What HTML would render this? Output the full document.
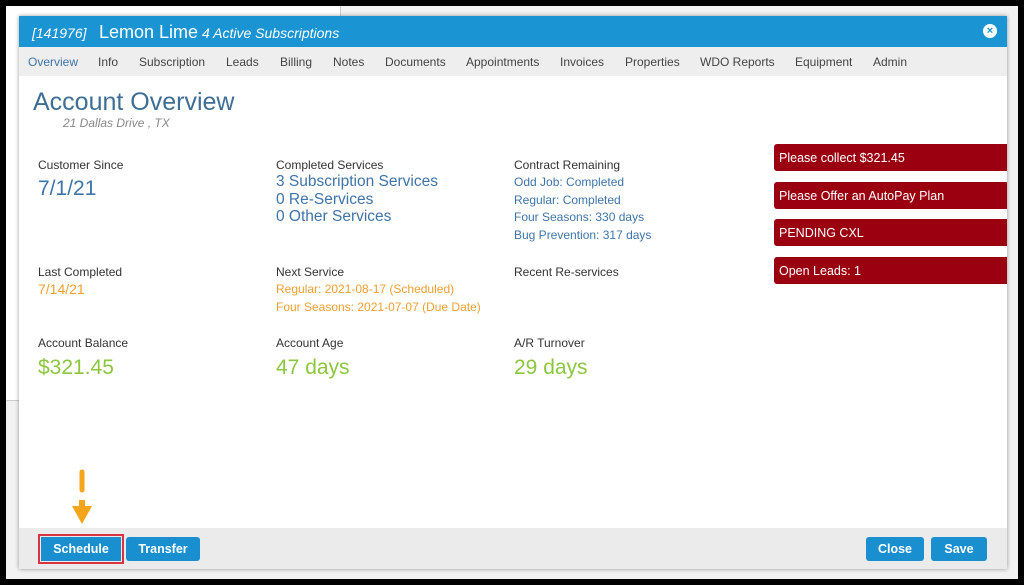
<!DOCTYPE html>
<html><head><meta charset="utf-8"><style>
*{margin:0;padding:0;box-sizing:border-box}
body{width:1024px;height:585px;background:#000;position:relative;overflow:hidden;font-family:"Liberation Sans",Arial,sans-serif}
.bg{position:absolute;left:6px;top:6px;width:1012px;height:573px;background:#f2f2f2}
.bg2{position:absolute;left:6px;top:6px;width:335px;height:395px;background:#fff;border-right:1px solid #ccc;border-bottom:1px solid #ccc}
.modal{position:absolute;left:19px;top:16px;width:988px;height:553px;background:#fff;box-shadow:0 0 4px rgba(0,0,0,.4)}
.hdr{height:31px;background:#1a94d2;color:#fff;position:relative}
.hdr .id{position:absolute;left:13px;top:9px;font-size:14px;font-style:italic}
.hdr .nm{position:absolute;left:80px;top:6px;font-size:18px}
.hdr .sub{position:absolute;left:183px;top:9px;font-size:14px;font-style:italic}
.x{position:absolute;right:10px;top:8px;width:14px;height:14px;border-radius:50%;background:#fff;color:#1a94d2;font-size:11px;font-weight:bold;text-align:center;line-height:14px}
.tabs{height:29px;background:#eee;position:relative;font-size:12px;color:#444}
.tabs span{position:absolute;top:8px}
h1{position:absolute;left:14px;top:72px;font-size:25px;font-weight:normal;color:#3f6e94}
.addr{position:absolute;left:44px;top:100px;font-size:12px;font-style:italic;color:#888}
.l{position:absolute;font-size:12px;color:#333}
.big{position:absolute;font-size:21px}
.bl{color:#3f74a8}.sm{position:absolute;font-size:12px;line-height:17.7px}
.or{color:#f0a030}.gr{color:#8cc63f}
.mid{position:absolute;font-size:15.5px;line-height:17.5px;color:#3f74a8}
.al{position:absolute;left:755px;width:233px;height:27px;background:#9b0010;color:#fff;font-size:12.5px;padding:7px 0 0 5px;border-radius:3px 0 0 3px}
.ftr{position:absolute;left:0;bottom:0;width:988px;height:41px;background:#ebebeb}
.btn{position:absolute;top:9px;height:24px;background:#1a8fd0;color:#fff;font-size:12.5px;font-weight:bold;text-align:center;line-height:24px;border-radius:3px}
</style></head><body>
<div class="bg"></div><div class="bg2"></div>
<div class="modal">
<div class="hdr"><span class="id">[141976]</span><span class="nm">Lemon Lime</span><span class="sub">4 Active Subscriptions</span><div class="x">×</div></div>
<div class="tabs">
<span style="left:9px;color:#3f74a8">Overview</span><span style="left:79px">Info</span><span style="left:120px">Subscription</span><span style="left:207px">Leads</span><span style="left:261px">Billing</span><span style="left:314px">Notes</span><span style="left:366px">Documents</span><span style="left:447px">Appointments</span><span style="left:541px">Invoices</span><span style="left:606px">Properties</span><span style="left:681px">WDO Reports</span><span style="left:776px">Equipment</span><span style="left:854px">Admin</span>
</div>
<h1>Account Overview</h1>
<div class="addr">21 Dallas Drive , TX</div>
<div class="l" style="left:19px;top:142px">Customer Since</div>
<div class="big bl" style="left:19px;top:161px">7/1/21</div>
<div class="l" style="left:257px;top:142px">Completed Services</div>
<div class="mid" style="left:257px;top:157px">3 Subscription Services<br>0 Re-Services<br>0 Other Services</div>
<div class="l" style="left:495px;top:142px">Contract Remaining</div>
<div class="sm bl" style="left:495px;top:158px">Odd Job: Completed<br>Regular: Completed<br>Four Seasons: 330 days<br>Bug Prevention: 317 days</div>
<div class="l" style="left:19px;top:249px">Last Completed</div>
<div class="sm or" style="left:19px;top:265px;font-size:14px">7/14/21</div>
<div class="l" style="left:257px;top:249px">Next Service</div>
<div class="sm or" style="left:257px;top:265px">Regular: 2021-08-17 (Scheduled)<br>Four Seasons: 2021-07-07 (Due Date)</div>
<div class="l" style="left:495px;top:249px">Recent Re-services</div>
<div class="l" style="left:19px;top:320px">Account Balance</div>
<div class="big gr" style="left:19px;top:340px">$321.45</div>
<div class="l" style="left:257px;top:320px">Account Age</div>
<div class="big gr" style="left:257px;top:340px">47 days</div>
<div class="l" style="left:495px;top:320px">A/R Turnover</div>
<div class="big gr" style="left:495px;top:340px">29 days</div>
<div class="al" style="top:128px">Please collect $321.45</div>
<div class="al" style="top:166px">Please Offer an AutoPay Plan</div>
<div class="al" style="top:203px">PENDING CXL</div>
<div class="al" style="top:241px">Open Leads: 1</div>
<div class="ftr">
<div class="btn" style="left:22px;width:80px;outline:2px solid #d9343f;outline-offset:1px;border-radius:0">Schedule</div>
<div class="btn" style="left:107px;width:74px">Transfer</div>
<div class="btn" style="left:847px;width:58px">Close</div>
<div class="btn" style="left:912px;width:56px">Save</div>
</div>
</div>
<svg style="position:absolute;left:70px;top:468px" width="24" height="60"><line x1="12" y1="4" x2="12" y2="22" stroke="#f3a51c" stroke-width="5" stroke-linecap="round"/><rect x="9" y="32" width="6" height="8" fill="#f3a51c"/><polygon points="2,38 22,38 12,56" fill="#f3a51c"/></svg>
</body></html>
